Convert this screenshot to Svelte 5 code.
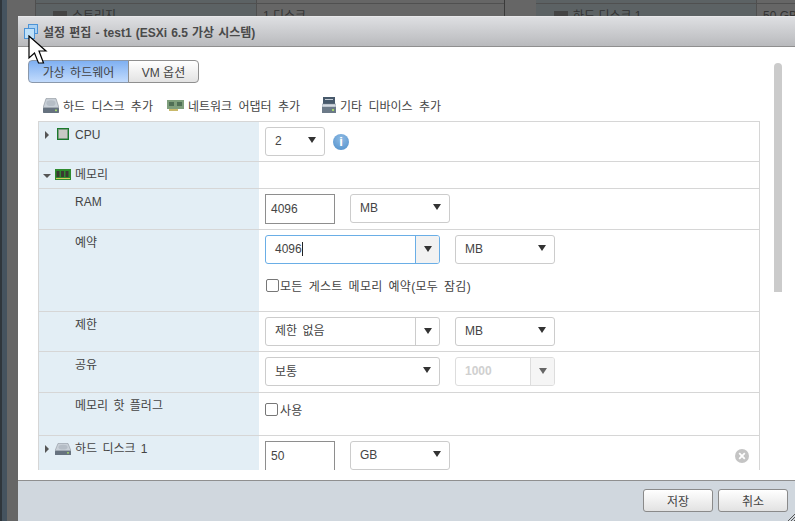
{#snippet select(value, cls)}
    <div class="select {cls}"><span>{value}</span><i class="caret"></i></div>
{/snippet}

{#snippet combo(value, cls, cursor)}
    <div class="combo {cls}">
        <span class="combo-value">{value}{#if cursor}<b class="cursor"></b>{/if}</span>
        <span class="combo-btn"><i class="caret"></i></span>
    </div>
{/snippet}

{#snippet disk(w, h)}
    <svg width={w} height={h} viewBox="0 0 16 13" preserveAspectRatio="none">
        <path d="M3 .5h10l3 8H0z" fill="#c9d0d8" stroke="#8c939b" stroke-width=".6"/>
        <ellipse cx="8" cy="4.500" rx="4.500" ry="2.500" fill="#b5bdc6"/>
        <rect x="0" y="8.500" width="16" height="4.500" rx=".6" fill="#66727f"/>
        <rect x="12" y="10" width="2" height="1.400" fill="#a5d86a"/>
    </svg>
{/snippet}

<div class="page">
    <div class="backdrop">
        <div class="b-edge"></div>
        <div class="b-nav"></div>
        <div class="b-col tint">
            <span class="b-text"><i class="b-icon"></i>스토리지</span>
        </div>
        <div class="b-col mid"><span class="b-text">1 디스크</span></div>
        <div class="b-col gap"></div>
        <div class="b-col tint wide"><span class="b-text"><i class="b-icon"></i>하드 디스크 1</span></div>
        <div class="b-col end"><span class="b-text">50 GB</span></div>
    </div>

    <div class="dialog">
        <header class="title">
            <svg class="title-icon" width="15" height="15" viewBox="0 0 15 15">
                <rect x="4.500" y=".5" width="9" height="9" fill="#a9d0f2" stroke="#4c93d6"/>
                <rect x=".5" y="4.500" width="10" height="10" fill="#bfe0f8" stroke="#4c93d6"/>
            </svg>
            설정 편집 - test1 (ESXi 6.5 가상 시스템)
        </header>

        <div class="content">
            <div class="tabs">
                <button class="tab active">가상 하드웨어</button>
                <button class="tab">VM 옵션</button>
            </div>

            <div class="toolbar">
                <span class="tool">
                    {@render disk(16, 15)}
                    하드 디스크 추가
                </span>
                <span class="tool">
                    <svg width="17" height="11" viewBox="0 0 17 11">
                        <rect width="17" height="9" fill="#7f9f7c"/>
                        <rect x="2" y="2" width="5" height="4" fill="#4f6f55"/>
                        <rect x="10" y="2" width="5" height="4" fill="#4f6f55"/>
                        <rect x="2" y="9" width="9" height="2" fill="#c9b96a"/>
                    </svg>
                    네트워크 어댑터 추가
                </span>
                <span class="tool last">
                    <svg width="14" height="16" viewBox="0 0 14 16">
                        <rect x="1" y="0" width="12" height="7" fill="#47596b"/>
                        <rect x="3" y="2" width="8" height="1" fill="#c3ccd6"/>
                        <rect x="0" y="7" width="14" height="3" fill="#d5dbe2" stroke="#7b8794" stroke-width=".5"/>
                        <rect x="0" y="10" width="14" height="6" fill="#6c7a88"/>
                        <rect x="10" y="12" width="2" height="2" fill="#a5d86a"/>
                    </svg>
                    기타 디바이스 추가
                </span>
            </div>

            <div class="table">
                <div class="row cpu">
                    <div class="label head">
                        <i class="tri right"></i>
                        <svg class="ico" width="12" height="12" viewBox="0 0 12 12">
                            <rect width="12" height="12" fill="#1b7a2c"/>
                            <rect x="1.500" y="1.500" width="9" height="9" fill="#c9c9c4" stroke="#8a958a" stroke-width=".5"/>
                        </svg>
                        CPU
                    </div>
                    <div class="cell">
                        {@render select('2', 'w60')}
                        <span class="info">i</span>
                    </div>
                </div>
                <div class="row mem">
                    <div class="label head">
                        <i class="tri down"></i>
                        <svg class="ico" width="16" height="11" viewBox="0 0 16 11">
                            <rect width="16" height="11" fill="#2e8b2e"/>
                            <rect x="1.500" y="2" width="3" height="6" fill="#3a3a32"/>
                            <rect x="6" y="2" width="3" height="6" fill="#3a3a32"/>
                            <rect x="10.500" y="2" width="3" height="6" fill="#3a3a32"/>
                            <rect x="1" y="9" width="14" height="1" fill="#d8c860"/>
                        </svg>
                        메모리
                    </div>
                    <div class="cell"></div>
                </div>
                <div class="row ram">
                    <div class="label sub">RAM</div>
                    <div class="cell">
                        <div class="input">4096</div>
                        {@render select('MB', 'w100')}
                    </div>
                </div>
                <div class="row reserve">
                    <div class="label sub">예약</div>
                    <div class="cell stack">
                        <div class="line">
                            {@render combo('4096', 'focus', true)}
                            {@render select('MB', 'w100')}
                        </div>
                        <label class="check"><i class="box"></i>모든 게스트 메모리 예약(모두 잠김)</label>
                    </div>
                </div>
                <div class="row limit">
                    <div class="label sub">제한</div>
                    <div class="cell">
                        {@render combo('제한 없음', '', false)}
                        {@render select('MB', 'w100')}
                    </div>
                </div>
                <div class="row share">
                    <div class="label sub">공유</div>
                    <div class="cell">
                        {@render select('보통', 'w175')}
                        {@render combo('1000', 'off', false)}
                    </div>
                </div>
                <div class="row hot">
                    <div class="label sub">메모리 핫 플러그</div>
                    <div class="cell"><label class="check tight"><i class="box"></i>사용</label></div>
                </div>
                <div class="row hdd">
                    <div class="label head">
                        <i class="tri right"></i>
                        <span class="ico">{@render disk(16, 12)}</span>
                        하드 디스크 1
                    </div>
                    <div class="cell">
                        <div class="input">50</div>
                        {@render select('GB', 'w100')}
                        <svg class="remove" width="14" height="14" viewBox="0 0 14 14">
                            <circle cx="7" cy="7" r="7" fill="#c4c4c4"/>
                            <path d="M4.200 4.200l5.600 5.600M9.800 4.200l-5.600 5.600" stroke="#fff" stroke-width="1.800"/>
                        </svg>
                    </div>
                </div>
            </div>
            <div class="scrollbar"></div>
        </div>

        <footer class="footer">
            <button class="btn">저장</button>
            <button class="btn">취소</button>
            <svg class="grip" width="7" height="7" viewBox="0 0 7 7">
                <path d="M0 7L7 0M3 7l4-4M6 7l1-1" stroke="#555" stroke-width="1"/>
            </svg>
        </footer>
    </div>

    <svg class="pointer" width="20" height="30" viewBox="0 0 20 30">
        <path d="M1 1V23L6.500 18 10.500 28 15.500 28 11 16 18 16Z" fill="#fff" stroke="#000" stroke-width="1.200"/>
    </svg>
</div>

<style>
    :global(body) {
        margin: 0;
        background: #666;
    }

    .page {
        position: relative;
        width: 795px;
        height: 521px;
        overflow: hidden;
        font-family: "Liberation Sans", "Noto Sans CJK KR", sans-serif;
        font-size: 12px;
        color: #444;
    }

    /* page behind the modal, dimmed */
    .backdrop {
        display: flex;
        height: 100%;
        background: #666;
    }

    .b-edge {
        width: 2px;
        background: #2f363c;
    }

    .b-nav {
        width: 5px;
        background: #45535f;
        margin-right: 28px;
    }

    .b-col {
        box-sizing: border-box;
        height: 17px;
        overflow: hidden;
        border-left: 1px solid #4f4f4f;
        color: #333;
        background-image: linear-gradient(#666 3px, #505050 3px, #505050 4px, transparent 4px);
    }

    .b-col.tint {
        width: 221px;
        background-color: #5c6264;
        background-image: linear-gradient(#5c6264 3px, #505050 3px, #505050 4px, transparent 4px);
    }

    .b-col.mid {
        width: 248px;
    }

    .b-col.gap {
        width: 32px;
        background-image: none;
        border-color: #3a3a3a;
    }

    .b-col.wide {
        width: 220px;
        border-color: transparent;
    }

    .b-col.end {
        flex: 1;
    }

    .b-text {
        display: flex;
        align-items: center;
        gap: 5px;
        margin: 9px 0 0 17px;
        line-height: 14px;
        white-space: nowrap;
    }

    .b-col.mid .b-text,
    .b-col.end .b-text {
        margin-left: 6px;
    }

    .b-icon {
        width: 14px;
        height: 10px;
        background: #444;
    }

    .dialog {
        position: absolute;
        left: 18px;
        top: 16px;
        right: 0;
        bottom: 0;
        display: flex;
        flex-direction: column;
        background: #fff;
        border-radius: 3px 3px 0 0;
    }

    .title {
        height: 31px;
        box-sizing: border-box;
        display: flex;
        align-items: center;
        gap: 4px;
        padding-left: 6px;
        border-bottom: 1px solid #8f8f8f;
        border-top: 1px solid #e8e8ea;
        background: linear-gradient(#dedfe2, #b9babd);
        font-weight: bold;
        color: #4a4a4a;
        word-spacing: .8px;
    }

    .content {
        position: relative;
        flex: 1;
        min-height: 0;
        padding: 13px 0 0 10px;
    }

    .tabs {
        display: flex;
    }

    .tab {
        height: 23px;
        padding: 0;
        font: inherit;
        color: #444;
        border: 1px solid #8f8f8f;
        background: linear-gradient(#ffffff, #e3e3e3);
        width: 71px;
        margin-left: -1px;
        border-radius: 0 4px 4px 0;
    }

    .tab.active {
        width: 101px;
        margin-left: 0;
        border-color: #8a98ab;
        border-radius: 4px 0 0 4px;
        background: linear-gradient(#7fb0f2, #c2dbfc);
        word-spacing: 2px;
    }

    .toolbar {
        display: flex;
        gap: 14px;
        padding: 14px 0 0 15px;
        height: 24px;
        box-sizing: border-box;
        word-spacing: 3px;
    }

    .tool {
        display: flex;
        align-items: center;
        gap: 4px;
        height: 16px;
    }

    .tool.last {
        margin-left: 8px;
    }

    .table {
        width: 722px;
        height: 349px;
        margin: 14px 0 0 10px;
        box-sizing: border-box;
        border: 1px solid #d6d6d6;
        border-bottom: 0;
        overflow: hidden;
        background: #fff;
    }

    .row {
        display: flex;
        box-sizing: border-box;
        border-bottom: 1px solid #d6d6d6;
    }

    .cpu { height: 40px; }
    .mem { height: 27px; }
    .ram { height: 41px; }
    .reserve { height: 82px; }
    .limit { height: 40px; }
    .share { height: 41px; }
    .hot { height: 43px; }
    .hdd { height: 36px; border-bottom: 0; }

    .label {
        width: 220px;
        flex: none;
        box-sizing: border-box;
        background: #e3eef5;
        padding-top: 5px;
        line-height: 16px;
        word-spacing: 2px;
    }

    .label.head {
        display: flex;
        align-items: flex-start;
        padding-left: 6px;
    }

    .ico {
        flex: none;
        margin: 2px 4px 0 0;
        display: block;
    }

    .cpu .ico {
        margin: 1px 6px 0 0;
    }

    .label.sub {
        padding-left: 36px;
    }

    .tri {
        display: block;
        width: 0;
        height: 0;
        flex: none;
    }

    .tri.right {
        margin: 4px 6px 0 0;
        border-left: 4px solid #555;
        border-top: 4px solid transparent;
        border-bottom: 4px solid transparent;
    }

    .cpu .tri.right {
        margin-right: 8px;
    }

    .tri.down {
        margin: 7px 4px 0 -2px;
        border-top: 4px solid #555;
        border-left: 4px solid transparent;
        border-right: 4px solid transparent;
    }

    .cell {
        flex: 1;
        min-width: 0;
        position: relative;
        display: flex;
        align-items: flex-start;
        gap: 15px;
        padding: 5px 0 0 6px;
    }

    .cell.stack {
        flex-direction: column;
        gap: 0;
    }

    .line {
        display: flex;
        gap: 15px;
    }

    .select {
        box-sizing: border-box;
        height: 29px;
        display: flex;
        align-items: center;
        justify-content: space-between;
        padding: 0 8px 2px 9px;
        border: 1px solid #ccc;
        border-radius: 3px;
        background: #fff;
    }

    .w60 { width: 60px; }
    .w100 { width: 100px; }
    .w175 { width: 175px; }

    .caret {
        display: block;
        width: 0;
        height: 0;
        margin-top: -2px;
        border-top: 6px solid #333;
        border-left: 4px solid transparent;
        border-right: 4px solid transparent;
    }

    .input {
        box-sizing: border-box;
        width: 70px;
        height: 30px;
        line-height: 28px;
        padding-left: 5px;
        border: 1px solid #8e8e8e;
    }

    .combo {
        box-sizing: border-box;
        width: 175px;
        height: 29px;
        display: flex;
        border: 1px solid #ccc;
        border-radius: 3px;
        overflow: hidden;
    }

    .combo-value {
        flex: 1;
        padding-left: 9px;
        line-height: 26px;
        word-spacing: 2px;
    }

    .combo-btn {
        width: 23px;
        flex: none;
        display: flex;
        align-items: center;
        justify-content: center;
        border-left: 1px solid #ccc;
    }

    .combo.focus {
        border-color: #6aaee6;
    }

    .combo.focus .combo-btn {
        border-left-color: #6aaee6;
        background: #f2f2f2;
    }

    .combo.off {
        width: 100px;
        border-color: #ddd;
    }

    .combo.off .combo-value {
        color: #d0d0d0;
        font-weight: bold;
    }

    .combo.off .combo-btn {
        background: #f5f5f5;
        border-left-color: #ddd;
    }

    .combo.off .caret {
        border-top-color: #666;
    }

    .cursor {
        display: inline-block;
        width: 1px;
        height: 14px;
        background: #222;
        vertical-align: -3px;
    }

    .check {
        display: flex;
        align-items: center;
        gap: 1px;
        margin: 13px 0 0 1px;
        word-spacing: 2.500px;
        letter-spacing: .25px;
    }

    .check.tight {
        margin: 3px 0 0;
        gap: 2px;
    }

    .box {
        display: block;
        width: 11px;
        height: 11px;
        border: 1px solid #777;
        border-radius: 2px;
        background: #fff;
    }

    .info {
        width: 16px;
        height: 16px;
        margin: 7px 0 0 -7px;
        border-radius: 50%;
        background: radial-gradient(circle at 50% 30%, #8fbbe4, #4f8fcb);
        color: #fff;
        font-weight: bold;
        font-size: 13px;
        line-height: 16px;
        text-align: center;
    }

    .remove {
        position: absolute;
        right: 10px;
        top: 13px;
    }

    .scrollbar {
        position: absolute;
        left: 756px;
        top: 16px;
        width: 8px;
        height: 229px;
        border-radius: 4px 4px 0 0;
        background: #cbcbcb;
    }

    .footer {
        position: relative;
        height: 41px;
        flex: none;
        box-sizing: border-box;
        display: flex;
        justify-content: flex-end;
        gap: 5px;
        padding: 8px 7px 0 0;
        border-top: 1px solid #8f8f8f;
        background: #d0d7de;
    }

    .btn {
        width: 70px;
        height: 23px;
        padding: 0;
        font: inherit;
        color: #444;
        border: 1px solid #8a8a8a;
        border-radius: 3px;
        background: linear-gradient(#ffffff, #e2e2e2);
    }

    .grip {
        position: absolute;
        right: 0;
        bottom: 0;
    }

    .pointer {
        position: absolute;
        left: 28px;
        top: 35px;
    }
</style>
